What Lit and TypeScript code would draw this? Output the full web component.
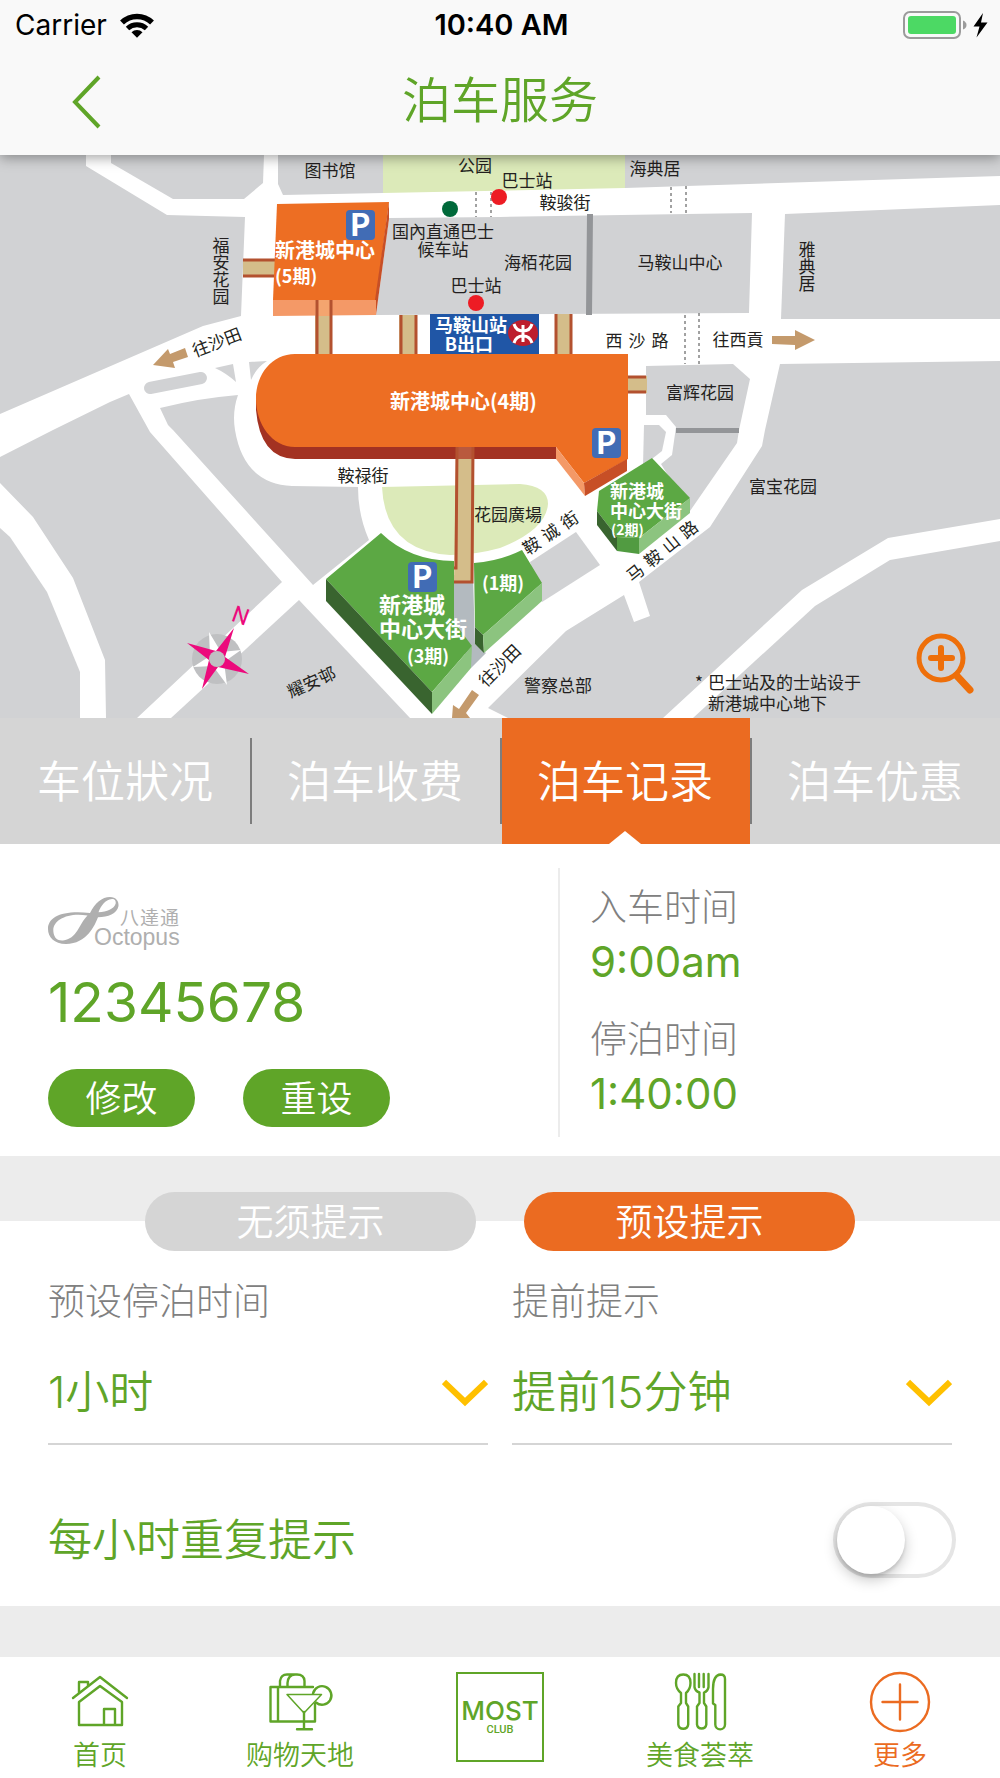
import { LitElement, html, svg, css } from "lit";
import { customElement, property, state } from "lit/decorators.js";
import { classMap } from "lit/directives/class-map.js";

const resets = css`
  *,
  *::before,
  *::after {
    box-sizing: border-box;
  }
  button,
  select,
  input {
    margin: 0;
    padding: 0;
    border: 0;
    font: inherit;
    color: inherit;
    background: none;
    appearance: none;
    cursor: pointer;
  }
  svg {
    display: block;
  }
`;

/* ---------- Header: device status and page title ---------- */

@customElement("app-header")
class AppHeader extends LitElement {
  static styles = [
    resets,
    css`
      :host {
        display: block;
        position: relative;
        background: #f9f9f9;
        box-shadow: 0 3px 12px rgba(0, 0, 0, 0.35);
      }
      .status {
        display: grid;
        grid-template-columns: 1fr auto 1fr;
        align-items: center;
        height: 50px;
        padding: 0 12px 0 15px;
        font: 400 28px/50px Inter, "Liberation Sans", sans-serif;
        color: #000;
      }
      .carrier {
        display: flex;
        align-items: center;
        gap: 13px;
      }
      .time {
        font-size: 29px;
        font-weight: 600;
      }
      .power {
        justify-self: end;
      }
      .bar {
        display: grid;
        grid-template-columns: 1fr auto 1fr;
        align-items: center;
        height: 105px;
        padding: 0 68px 4px;
        color: #5fa528;
      }
      .back {
        width: 44px;
        height: 60px;
      }
      h1 {
        margin: 0;
        font-size: 49px;
        font-weight: 350;
        line-height: 96px;
      }
    `,
  ];

  render() {
    return html`
      <div class="status">
        <span class="carrier">
          Carrier
          <svg width="34" height="25" viewBox="0 0 34 25" fill="none" stroke="#000" aria-hidden="true">
            <path d="M2 9.500A21.500 21.500 0 0 1 32 9.500" stroke-width="5.500" />
            <path d="M7.500 15.500A14 14 0 0 1 26.500 15.500" stroke-width="5" />
            <path d="M11.500 19.200A8 8 0 0 1 22.500 19.200L17 24.800Z" fill="#000" stroke="none" />
          </svg>
        </span>
        <span class="time">10:40 AM</span>
        <svg class="power" width="86" height="28" viewBox="0 0 86 28" aria-hidden="true">
          <rect x="2" y="1" width="56" height="26" rx="6" fill="none" stroke="#9b9b9b" stroke-width="2" />
          <rect x="6" y="5" width="48" height="18" rx="3" fill="#4cd964" />
          <path d="M61 9.500Q64.500 11 64.500 14T61 18.500Z" fill="#9b9b9b" />
          <path d="M81 2L71.500 15.500H77.500L74.500 26.500L85.500 11.500H79Z" fill="#000" />
        </svg>
      </div>
      <div class="bar">
        <button class="back" type="button" aria-label="返回">
          <svg width="44" height="60" viewBox="0 0 44 60" fill="none" stroke="currentColor" stroke-width="4">
            <path d="M31 6L7 31L31 56" />
          </svg>
        </button>
        <h1>泊车服务</h1>
      </div>
    `;
  }
}

/* ---------- District map ---------- */

type Label = {
  t: string;
  x: number;
  y: number;
  rotate?: number;
  /* distance between characters of a street name that is set apart */
  pitch?: number;
};

const placeNames: Label[] = [
  { t: "图书馆", x: 330, y: 177 },
  { t: "公园", x: 475, y: 172 },
  { t: "巴士站", x: 527, y: 187 },
  { t: "海典居", x: 655, y: 175 },
  { t: "鞍骏街", x: 565, y: 209 },
  { t: "国內直通巴士", x: 443, y: 238 },
  { t: "候车站", x: 443, y: 256 },
  { t: "海栢花园", x: 538, y: 269 },
  { t: "巴士站", x: 476, y: 292 },
  { t: "马鞍山中心", x: 680, y: 269 },
  { t: "富辉花园", x: 700, y: 399 },
  { t: "西沙路", x: 637, y: 347, pitch: 23 },
  { t: "往西貢", x: 738, y: 346 },
  { t: "鞍禄街", x: 363, y: 482 },
  { t: "花园廣場", x: 508, y: 521 },
  { t: "富宝花园", x: 783, y: 493 },
  { t: "警察总部", x: 558, y: 692 },
  { t: "往沙田", x: 219, y: 348, rotate: -21 },
  { t: "往沙田", x: 504, y: 670, rotate: -45 },
  { t: "耀安邨", x: 314, y: 688, rotate: -24 },
  { t: "鞍诚街", x: 554, y: 538, rotate: -34, pitch: 23 },
  { t: "马鞍山路", x: 666, y: 556, rotate: -39, pitch: 23 },
];

const blocks = [
  "0,155 86,155 86,166 167,215 245,217 241,316 203,326 0,414",
  "111,155 264,155 263,183 244,199 173,199 111,163",
  "278,155 383,155 383,193 283,195 278,184",
  "625,155 1000,155 1000,176 625,188",
  "389,218 500,217 752,213 749,313 376,315",
  "785,214 1000,205 1000,319 781,319",
  "780,364 1000,361 1000,519 888,538 802,590 663,718 508,718 488,708 566,631 624,595 634,622 650,616 639,582 710,527 762,446 765,430",
  "693,718 815,606 890,560 1000,541 1000,718",
  "646,366 733,364 750,379 739,430 737,443 690,511 661,464 672,455 676,427 666,415 646,415",
  "644,425 659,425 666,432 662,451 643,466",
  "0,457 53,430 110,402 129,394 150,432 282,582 137,718 106,718 105,660 73,578 33,517 0,483",
  "0,528 10,537 47,592 80,672 80,718 0,718",
  "299,600 410,718 171,718",
  "530,562 576,532 600,565 542,602",
];

const parking = (x: number, y: number) => svg`
  <rect class="p-sign" x=${x} y=${y} width="29" height="30" rx="4" />
  <text class="p-letter" x=${x + 14} y=${y + 26}>P</text>
`;

@customElement("district-map")
class DistrictMap extends LitElement {
  static styles = [
    resets,
    css`
      :host {
        display: grid;
      }
      svg {
        width: 100%;
        height: auto;
        overflow: visible;
      }
      text {
        font-family: "Noto Sans CJK SC", sans-serif;
        font-size: 17px;
        fill: #231f20;
      }
      .name {
        text-anchor: middle;
      }
      .vertical {
        writing-mode: vertical-rl;
      }
      .white {
        fill: #fff;
        font-weight: 700;
        font-size: 18px;
      }
      .small {
        font-size: 14px;
      }
      .large {
        font-size: 20px;
      }
      .xlarge {
        font-size: 22px;
      }
      .block {
        fill: #d1d2d4;
      }
      .park {
        fill: #dceab9;
      }
      .bridge {
        fill: #d4bd8a;
      }
      .rail {
        stroke: #b3512f;
        stroke-width: 3;
        fill: none;
      }
      .dash {
        stroke: #444;
        stroke-width: 1;
        stroke-dasharray: 3 3;
      }
      .orange {
        fill: #ed6e23;
      }
      .orange-lit {
        fill: #f49967;
      }
      .orange-dim {
        fill: #c74f26;
      }
      .brick {
        fill: #a33222;
      }
      .green {
        fill: #5ca844;
      }
      .green-lit {
        fill: #8cc47f;
      }
      .green-dim {
        fill: #39642f;
      }
      .arrow {
        fill: #c49a6c;
      }
      .p-sign {
        fill: #416cb5;
      }
      .p-letter {
        font: 700 31px/1 "Noto Sans CJK SC", sans-serif;
        fill: #fff;
        text-anchor: middle;
      }
      .north {
        font: 400 23px/1 Roboto, sans-serif;
        fill: #ec0a7c;
        text-anchor: middle;
      }
    `,
  ];

  private label(l: Label) {
    const n = l.t.length;
    const xs = l.pitch ? Array.from({ length: n }, (_, i) => (i - (n - 1) / 2) * l.pitch!).join(" ") : "0";
    return svg`<text class="name" x=${xs} y="0" transform="translate(${l.x} ${l.y}) rotate(${l.rotate ?? 0})">${l.t}</text>`;
  }

  render() {
    return html`
      <svg viewBox="0 155 1000 563" role="img" aria-label="新港城中心地图">
        <rect y="155" width="1000" height="563" fill="#fff" />
        ${blocks.map((p) => svg`<polygon class="block" points=${p} />`)}
        <path class="block" d="M160 408Q200 398 238 395Q232 412 235 430Q244 484 292 486L358 487Q358 515 369 540L313 585L173 430L168 425Z" />
        <path class="block" d="M215 368L233 364L236 382Q226 373 215 368ZM249 362L267 361Q256 368 251 380Z" />
        <path d="M150 388L201 378" stroke="#d1d2d4" stroke-width="12" stroke-linecap="round" />
        <polygon class="park" points="383,155 625,155 625,188 383,193" />
        <path class="park" d="M382 487L520 484Q548 486 548 504Q546 530 500 548Q475 555 450 555Q385 551 382 487Z" />
        <path fill="#939598" d="M587 214H593L592 315H586ZM676 428H739V433H676Z" />
        <path class="dash" d="M476 192V217M491 192V217M671 187V213M686 186V213M685 315V364M699 313V364" />

        <path class="bridge" d="M243 259H276V277H243ZM399 315H417V354H399ZM555 314H572V354H555ZM628 376H647V393H628Z" />
        <path class="rail" d="M243 260H276M243 276H276M401 315V354M416 315V354M556 314V354M571 314V354M628 377H646M628 392H646" />

        <polygon class="orange" points="277,204 389,202 376,300 273,300" />
        <polygon class="orange-dim" points="389,202 389,219 376,315 375,300" />
        <polygon class="orange-lit" points="273,300 376,300 376,315 273,316" />
        <path class="bridge" d="M315 316H332V354H315Z" />
        <path fill="#f4a56f" d="M315 300H332V316H315Z" />
        <path class="rail" d="M317 300V354M331 300V354" />

        <rect x="430" y="314" width="109" height="40" fill="#2056a6" />
        <ellipse cx="523" cy="333" rx="15" ry="13" fill="#bd1e2d" />
        <path d="M523 325V342M514 324Q516 331 523 331Q530 331 532 324M514 343Q516 336 523 336Q530 336 532 343" fill="none" stroke="#fff" stroke-width="3" />

        <path class="brick" d="M256 399V410Q260 458 295 459H556V440H295Z" />
        <path class="orange" d="M295 354H628V459L584 483L556 447H295C272 447 256 424 256 399C256 374 272 354 295 354Z" />
        <polygon class="orange-lit" points="556,447 584,483 585,496 556,459" />
        <polygon class="orange-dim" points="584,483 627,459 627,471 585,496" />

        <polygon fill="#b3babf" points="454,575 473,575 475,644 486,653 471,668 454,630" />
        <path class="green" d="M381 533Q410 561 454 561V622L472 646L432 692L326 579Z" />
        <polygon class="green-dim" points="326,579 432,692 432,714 326,601" />
        <polygon class="green-lit" points="432,692 472,646 471,668 432,714" />
        <path class="green" d="M474 563Q500 561 522 550L542 583L483 635L475 627Z" />
        <polygon class="green-dim" points="475,627 483,635 484,653 475,644" />
        <polygon class="green-lit" points="483,635 542,583 542,601 484,653" />
        <polygon class="green" points="652,458 690,498 639,538 617,537 597,511 599,491" />
        <polygon class="green-dim" points="597,511 617,537 617,551 597,525" />
        <polygon fill="#519b41" points="617,537 639,538 639,554 617,551" />
        <polygon class="green-lit" points="639,538 690,498 690,513 639,554" />

        <polygon class="bridge" points="456,459 474,459 473,583 454,583" />
        <rect x="456" y="447" width="18" height="12" fill="#b9593e" />
        <path class="rail" stroke-width="2" d="M457 447L456 568H454M473 447L472 582H454" />

        <circle cx="450" cy="209" r="8" fill="#00693a" />
        <circle cx="499" cy="197" r="8" fill="#ed1c24" />
        <circle cx="476" cy="303" r="8" fill="#ed1c24" />
        <polygon class="arrow" points="772,336 795,336 795,330 815,340 795,350 795,345 772,344" />
        <polygon class="arrow" points="153,365 168,349 170,354 185,348 188,357 173,362 175,368" />
        <polygon class="arrow" points="472,690 479,695 466,713 470,718 452,718 453,705 459,709" />

        <circle cx="217" cy="659" r="25" fill="#bfc0c2" />
        <polygon fill="#fff" points="209,632 221,652 241,650 224,662 227,685 213,666 193,667 210,656" />
        <polygon fill="#ec0a7c" points="234,628 225,657 249,674 218,667 202,689 209,660 187,643 216,651" />
        <circle cx="217" cy="659" r="8" fill="#bfc0c2" />
        <text class="north" transform="translate(238 623) rotate(20)">N</text>

        ${placeNames.map((l) => this.label(l))}
        <text class="vertical" x="221" y="237">福安花园</text>
        <text class="vertical" x="807" y="241">雅典居</text>
        <text x="695" y="689">*</text>
        <text x="708" y="689">巴士站及的士站设于</text>
        <text x="708" y="710">新港城中心地下</text>

        <text class="white large" x="275" y="258">新港城中心</text>
        <text class="white" x="275" y="283">(5期)</text>
        <text class="white large" x="390" y="409">新港城中心(4期)</text>
        <text class="white name" x="471" y="332">马鞍山站</text>
        <text class="white name" x="469" y="351">B出口</text>
        <text class="white xlarge" x="379" y="613">新港城</text>
        <text class="white xlarge" x="379" y="637">中心大街</text>
        <text class="white name" x="428" y="663">(3期)</text>
        <text class="white name" x="503" y="590">(1期)</text>
        <text class="white" x="610" y="498">新港城</text>
        <text class="white" x="610" y="518">中心大街</text>
        <text class="white small" x="611" y="535">(2期)</text>
        ${parking(346, 210)}${parking(592, 428)}${parking(408, 562)}

        <g fill="none" stroke="#ee6f0a" stroke-width="5" stroke-linecap="round">
          <circle cx="941" cy="658" r="22" />
          <path stroke-width="6" d="M931 658H952M941 648V668" />
          <path stroke-width="7" d="M957 676L970 690" />
        </g>
      </svg>
    `;
  }
}

/* ---------- Section tabs ---------- */

@customElement("section-tabs")
class SectionTabs extends LitElement {
  @state() private active = 2;
  private tabs = ["车位狀况", "泊车收费", "泊车记录", "泊车优惠"];

  static styles = [
    resets,
    css`
      :host {
        display: grid;
        grid-template-columns: repeat(4, 1fr);
        background: #d5d5d5;
        color: #fff;
      }
      .tab {
        position: relative;
        height: 126px;
        padding-bottom: 5px;
        font-size: 44px;
        font-weight: 350;
      }
      .tab + .tab {
        background: linear-gradient(#7d7d7d, #7d7d7d) 0 20px / 2px 86px no-repeat;
      }
      .tab.active {
        background: linear-gradient(#7d7d7d, #7d7d7d) 0 20px / 2px 86px no-repeat,
          linear-gradient(#eb6b21, #eb6b21) 2px 0 / 100% 100% no-repeat;
      }
      .tab.active::after {
        content: "";
        position: absolute;
        left: 50%;
        bottom: 0;
        width: 32px;
        height: 13px;
        margin-left: -16px;
        background: #fff;
        clip-path: polygon(50% 0, 100% 100%, 0 100%);
      }
    `,
  ];

  render() {
    return this.tabs.map(
      (t, i) => html`<button
        type="button"
        class=${classMap({ tab: true, active: i === this.active })}
        aria-pressed=${i === this.active}
        @click=${() => (this.active = i)}
      >
        ${t}
      </button>`
    );
  }
}

/* ---------- Parking record ---------- */

@customElement("parking-record")
class ParkingRecord extends LitElement {
  static styles = [
    resets,
    css`
      :host {
        display: grid;
        grid-template-columns: 558fr 442fr;
        padding: 24px 0 19px;
        background: #fff;
        color: #5fa528;
      }
      .card {
        padding: 29px 48px 0;
      }
      .logo {
        overflow: visible;
      }
      .logo text {
        fill: #afafaf;
      }
      .zh {
        font-size: 19px;
      }
      .en {
        font: 400 23px/1 "Liberation Sans", sans-serif;
      }
      .number {
        margin: 21px 0 35px;
        font-size: 55px;
        line-height: 64px;
      }
      .actions {
        display: flex;
        gap: 48px;
      }
      .pill {
        width: 147px;
        height: 58px;
        padding-top: 2px;
        border-radius: 29px;
        background: #5fa528;
        color: #fff;
        font-size: 36px;
        font-weight: 350;
        line-height: 56px;
      }
      .times {
        display: grid;
        align-content: start;
        gap: 24px;
        margin: 0;
        padding: 16px 30px 13px;
        border-left: 2px solid #ececec;
      }
      dt {
        color: #808080;
        font-size: 37px;
        font-weight: 300;
        line-height: 48px;
      }
      dd {
        margin: 0;
        font-size: 42px;
        line-height: 60px;
      }
    `,
  ];

  render() {
    return html`
      <div class="card">
        <svg class="logo" width="132" height="52" viewBox="0 0 132 52" role="img" aria-label="八達通 Octopus">
          <path
            fill="#afafaf"
            fill-rule="evenodd"
            d="M0 32C0 20 14 13 42 16C47 6 54 0 62 0C68 0 71 4 70.500 9C69 17 60 20 50 20.300C47 28 39 47 18 47C6 47 0 40 0 32ZM39.500 18.500C20 15 5.300 23 5.300 33C5.300 39 8 44 15 43.500C29 42 31 27 39.500 18.500ZM50.500 15.200C53 9 57 2.500 64 2C67 2 68 4 67.700 6.500C66 12 59 15 50.500 15.200Z"
          />
          <text class="zh" x="72 92 112" y="28">八達通</text>
          <text class="en" x="46" y="48">Octopus</text>
        </svg>
        <div class="number">12345678</div>
        <div class="actions">
          <button class="pill" type="button">修改</button>
          <button class="pill" type="button">重设</button>
        </div>
      </div>
      <dl class="times">
        <div><dt>入车时间</dt><dd>9:00am</dd></div>
        <div><dt>停泊时间</dt><dd>1:40:00</dd></div>
      </dl>
    `;
  }
}

/* ---------- Reminder settings ---------- */

@customElement("reminder-settings")
class ReminderSettings extends LitElement {
  @state() private preset = true;

  static styles = [
    resets,
    css`
      :host {
        display: block;
        padding: 36px 0 28px;
        background: linear-gradient(#ececec, #ececec) 0 0 / 100% 65px no-repeat #fff;
        color: #5fa528;
      }
      .modes {
        display: grid;
        grid-template-columns: 1fr 1fr;
        gap: 48px;
        padding: 0 145px;
      }
      .mode {
        height: 59px;
        padding-top: 2px;
        border-radius: 30px;
        background: #d5d5d5;
        color: #fff;
        font-size: 37px;
        font-weight: 350;
        line-height: 57px;
      }
      .mode.on {
        background: #eb6b21;
      }
      .fields {
        display: grid;
        grid-template-columns: 1fr 1fr;
        gap: 24px;
        padding: 25px 48px 0;
      }
      .field {
        display: grid;
        align-items: center;
      }
      .field label {
        margin-bottom: 13px;
        color: #808080;
        font-size: 37px;
        font-weight: 300;
        line-height: 52px;
      }
      .field select {
        grid-area: 2 / 1;
        height: 104px;
        border-bottom: 2px solid #d5d5d5;
        border-radius: 0;
        font-size: 44px;
        font-weight: 350;
      }
      .field svg {
        grid-area: 2 / 1;
        justify-self: end;
        pointer-events: none;
      }
      .repeat {
        display: flex;
        align-items: center;
        justify-content: space-between;
        padding: 57px 44px 0 48px;
        font-size: 44px;
        font-weight: 350;
        line-height: 76px;
      }
      .switch {
        width: 123px;
        height: 76px;
        padding: 4px;
        border-radius: 38px;
        box-shadow: inset 0 0 0 4px #e5e5e5;
      }
      .switch::before {
        content: "";
        display: block;
        width: 68px;
        height: 68px;
        border-radius: 50%;
        background: #fff;
        box-shadow: 0 6px 14px rgba(0, 0, 0, 0.22), 0 3px 3px rgba(0, 0, 0, 0.1);
      }
      .switch:checked {
        background: #5fa528;
      }
      .switch:checked::before {
        margin-left: 47px;
      }
    `,
  ];

  private chevron() {
    return html`<svg width="46" height="28" viewBox="0 0 46 28" fill="none" stroke="#ffc000" stroke-width="6" aria-hidden="true">
      <path d="M2 3L23 23L44 3" />
    </svg>`;
  }

  render() {
    return html`
      <div class="modes">
        <button type="button" class=${classMap({ mode: true, on: !this.preset })} @click=${() => (this.preset = false)}>无须提示</button>
        <button type="button" class=${classMap({ mode: true, on: this.preset })} @click=${() => (this.preset = true)}>预设提示</button>
      </div>
      <div class="fields">
        <div class="field">
          <label for="duration">预设停泊时间</label>
          <select id="duration"><option>1小时</option></select>
          ${this.chevron()}
        </div>
        <div class="field">
          <label for="advance">提前提示</label>
          <select id="advance"><option>提前15分钟</option></select>
          ${this.chevron()}
        </div>
      </div>
      <div class="repeat">
        <label for="repeat">每小时重复提示</label>
        <input class="switch" id="repeat" type="checkbox" role="switch" />
      </div>
    `;
  }
}

/* ---------- Bottom navigation ---------- */

const icons = {
  home: svg`
    <path d="M3 26L30 5L57 26M9 21V10H18V14" />
    <path d="M30 14L9 30V53H52V30ZM34 53V37H45V53" />`,
  shop: svg`
    <path d="M43 15H0.500V49.500H45V32M8 15V49M10 15V9Q11 2.500 17 2.500H27Q34 2.500 34.500 9V15M17.500 15V11Q18 3 25 2.500" />
    <path stroke-width="1.500" d="M17 22.500H51.500L34 41Z" />
    <path d="M34 40V57M27 57.300H42M43 21.500A9.300 9.300 0 1 1 46 30.500" />`,
  food: svg`
    <path d="M11 31V21Q6 17 6 11C6 5 9 2.500 13.300 2.500C18 2.500 20.500 5 20.500 11Q20.500 17 16 21V31L18.200 34.500V52.500A5 5 0 0 1 8.300 52.500V34.500Z" />
    <path d="M24.500 2V15Q25 19 29.500 20.500V31L27 34.500V52.500A4.700 4.700 0 0 0 36.300 52.500V34.500L34 31V20.500Q38 19 38.500 15V2M29 2V15M33.700 2V15" />
    <path d="M43 31.500V17Q43 3 50.500 2.500Q55 2.500 55 7V52.500A4.800 4.800 0 0 1 45.300 52.500V33Z" />`,
  more: svg`
    <circle cx="30" cy="30" r="29" /><path d="M12.500 30H47.500M30 12.500V47.500" />`,
};

@customElement("nav-item")
class NavItem extends LitElement {
  @property() label = "";
  @property() icon: keyof typeof icons = "home";

  static styles = [
    resets,
    css`
      a {
        display: grid;
        justify-items: center;
        gap: 4px;
        color: inherit;
        text-decoration: none;
        font-size: 27px;
        font-weight: 350;
        line-height: 40px;
      }
      svg {
        overflow: visible;
        fill: none;
        stroke: currentColor;
        stroke-width: 2.400;
        stroke-linecap: round;
        stroke-linejoin: round;
      }
    `,
  ];

  render() {
    return html`<a href="#">
      <svg width="60" height="60" viewBox="0 0 60 60" aria-hidden="true">${icons[this.icon]}</svg>
      ${this.label}
    </a>`;
  }
}

@customElement("app-root")
class AppRoot extends LitElement {
  static styles = [
    resets,
    css`
      :host {
        display: flex;
        flex-direction: column;
        min-height: 100vh;
        background: #ececec;
        font-family: Inter, "Noto Sans CJK SC", sans-serif;
      }
      app-header {
        z-index: 1;
      }
      .bottom {
        display: grid;
        grid-template-columns: repeat(5, 1fr);
        min-height: 121px;
        margin-top: auto;
        padding-top: 15px;
        background: #fff;
        color: #5fa528;
      }
      .current {
        color: #eb6b21;
      }
      .club {
        display: grid;
        justify-items: center;
        align-content: center;
        justify-self: center;
        width: 88px;
        height: 90px;
        border: 2px solid #5fa528;
        color: #5fa528;
        text-decoration: none;
        line-height: 26px;
        font-size: 26px;
        font-weight: 500;
      }
      .club small {
        font: 500 11px/12px Roboto, sans-serif;
      }
    `,
  ];

  render() {
    return html`
      <app-header></app-header>
      <district-map></district-map>
      <section-tabs></section-tabs>
      <parking-record></parking-record>
      <reminder-settings></reminder-settings>
      <nav class="bottom">
        <nav-item icon="home" label="首页"></nav-item>
        <nav-item icon="shop" label="购物天地"></nav-item>
        <a class="club" href="#">MOST<small>CLUB</small></a>
        <nav-item icon="food" label="美食荟萃"></nav-item>
        <nav-item class="current" icon="more" label="更多"></nav-item>
      </nav>
    `;
  }
}
